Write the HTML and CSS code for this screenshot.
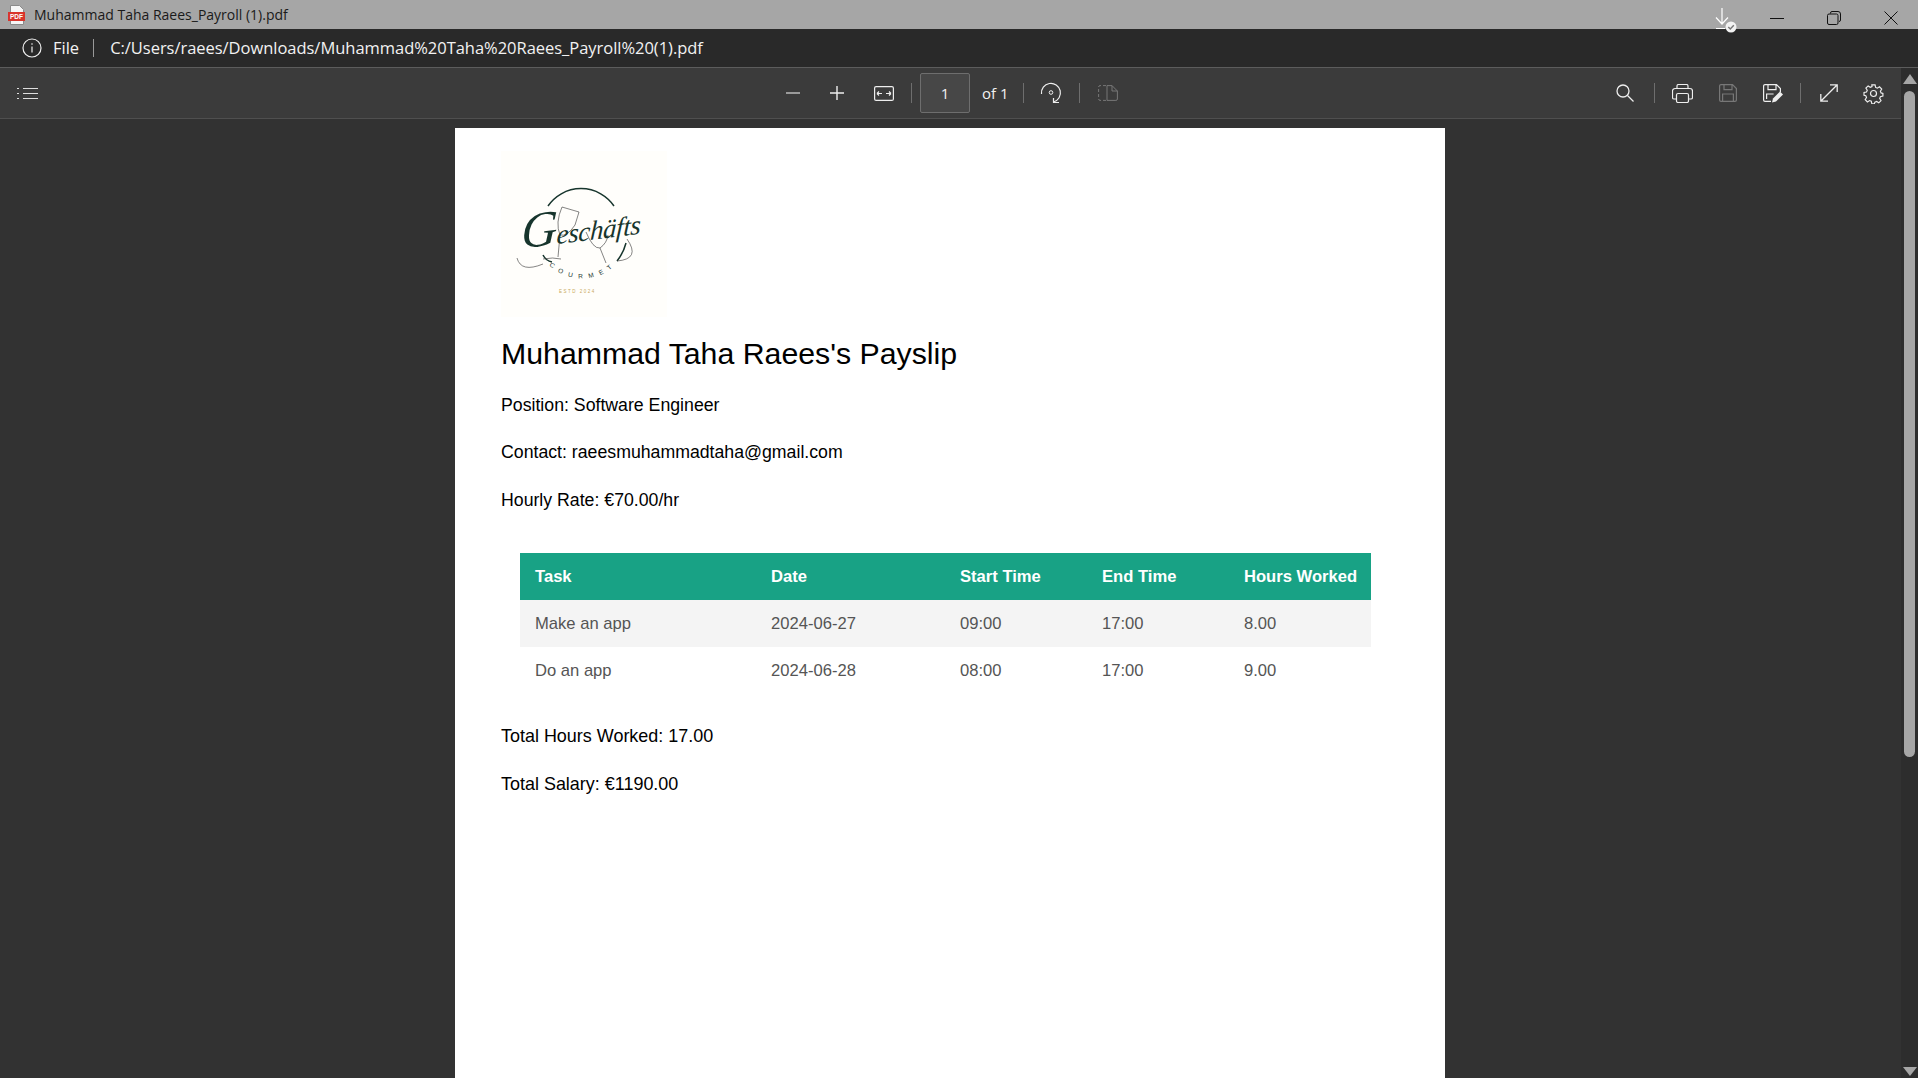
FILE: index.html
```html
<!DOCTYPE html>
<html lang="en-US">
<head>
	<meta charset="utf-8">
	<title>Muhammad Taha Raees_Payroll (1).pdf</title>
	<link rel="stylesheet" href="styles.css">
</head>
<body>
<div class="window">

<!--Title bar-->
<div class="titlebar">
	<svg class="pdf-icon" width="18" height="20" viewBox="0 0 18 20">
		<path d="M2.500.5h9l4 4v15h-13z" fill="#f6f6f6" stroke="#8a8a8a"/>
		<rect x="0" y="7" width="17" height="9" fill="#d9342b"/>
		<text class="pdf-label" x="8.500" y="14">PDF</text>
	</svg>
	<span class="doc-name">Muhammad Taha Raees_Payroll (1).pdf</span>
	<div class="win-buttons">
		<svg class="win-btn" width="14" height="14" viewBox="0 0 14 14"><path d="M0 7.500h14" stroke="#111" fill="none"/></svg>
		<svg class="win-btn" width="14" height="14" viewBox="0 0 14 14"><path d="M3.500 2.500V2a1.500 1.500 0 0 1 1.500-1.500h6A2.500 2.500 0 0 1 13.500 3v6a1.500 1.500 0 0 1-1.500 1.500M2 3h7.500A1.500 1.500 0 0 1 11 4.500V12a1.500 1.500 0 0 1-1.500 1.500H2A1.500 1.500 0 0 1 .5 12V4.500A1.500 1.500 0 0 1 2 3z" stroke="#111" fill="none"/></svg>
		<svg class="win-btn" width="14" height="14" viewBox="0 0 14 14"><path d="M.5.500l13 13M13.500.500l-13 13" stroke="#111" fill="none"/></svg>
	</div>
	<!--finished download badge hangs over the address bar-->
	<svg class="download" width="24" height="34" viewBox="0 0 24 34">
		<path d="M7 8v16M1 17.500L7 24l6-6.500M1 28.500h9" stroke="#fff" stroke-width="1.200" fill="none"/>
		<circle cx="16" cy="27" r="5.500" fill="#f2f2f2"/>
		<path d="M13.300 27l2 2 3.500-3.800" stroke="#777" stroke-width="1.400" fill="none"/>
	</svg>
</div>

<!--Address bar-->
<div class="addressbar">
	<svg class="info" width="20" height="20" viewBox="0 0 20 20">
		<circle cx="10" cy="10" r="9" stroke="#eee" stroke-width="1.200" fill="none"/>
		<path d="M10 8.500v6M10 5.200v1.600" stroke="#eee" stroke-width="1.200" fill="none"/>
	</svg>
	<span class="scheme">File</span>
	<span class="addr-sep"></span>
	<span class="url">C:/Users/raees/Downloads/Muhammad%20Taha%20Raees_Payroll%20(1).pdf</span>
</div>

<div class="viewer">
	<div class="viewer-main">

		<!--PDF toolbar-->
		<div class="toolbar">
			<svg class="list-icon" width="22" height="13" viewBox="0 0 22 13">
				<path d="M0 1.500h2M6 1.500h15M0 6.500h2M6 6.500h15M0 11.500h2M6 11.500h15" stroke="#ddd" stroke-width="1.200" fill="none"/>
			</svg>

			<div class="tool-group center-tools">
				<span class="tool"><svg width="14" height="14" viewBox="0 0 14 14"><path d="M0 7h14" stroke="#bbb" stroke-width="1.500"/></svg></span>
				<span class="tool"><svg width="14" height="14" viewBox="0 0 14 14"><path d="M0 7h14M7 0v14" stroke="#eee" stroke-width="1.400"/></svg></span>
				<span class="tool fit"><svg width="20" height="15" viewBox="0 0 20 15"><rect x=".6" y=".6" width="18.800" height="13.800" rx="1.500" stroke="#eee" stroke-width="1.200" fill="none"/><path d="M3 7.500h5M3 7.500l2-2M3 7.500l2 2M12 7.500h5M17 7.500l-2-2M17 7.500l-2 2" stroke="#eee" stroke-width="1.200" fill="none"/></svg></span>
				<span class="sep sep-fit"></span>
				<span class="page-box">1</span>
				<span class="page-count">of 1</span>
				<span class="sep sep-count"></span>
				<span class="tool rotate"><svg width="22" height="24" viewBox="0 0 22 24"><path d="M1.500 13A9.500 9.500 0 1 1 13.500 21" stroke="#eee" stroke-width="1.200" fill="none"/><path d="M13.500 17v4.500H19" stroke="#eee" stroke-width="1.200" fill="none"/><circle cx="11" cy="11.500" r="1.800" stroke="#eee" fill="none"/></svg></span>
				<span class="sep sep-rotate"></span>
				<span class="tool spread"><svg width="20" height="16" viewBox="0 0 20 16"><path d="M8 .6H2A1.500 1.500 0 0 0 .6 2v12A1.500 1.500 0 0 0 2 15.400h6" stroke="#777" stroke-dasharray="3 2" fill="none"/><path d="M9 .6h5l5.400 5.400v8a1.500 1.500 0 0 1-1.500 1.400H9zM14 .6V6h5.400" stroke="#777" fill="none"/></svg></span>
			</div>

			<div class="tool-group right-tools">
				<span class="tool"><svg width="18" height="18" viewBox="0 0 18 18"><circle cx="7" cy="7" r="6" stroke="#eee" stroke-width="1.300" fill="none"/><path d="M11.500 11.500L17.500 17.500" stroke="#eee" stroke-width="1.300"/></svg></span>
				<span class="sep sep-search"></span>
				<span class="tool"><svg width="21" height="19" viewBox="0 0 21 19"><path d="M5 5V2a1.500 1.500 0 0 1 1.500-1.500h8A1.500 1.500 0 0 1 16 2v3M5 15H2a1.500 1.500 0 0 1-1.500-1.500V7A2.500 2.500 0 0 1 3 4.500h15A2.500 2.500 0 0 1 20.500 7v6.500A1.500 1.500 0 0 1 19 15h-3" stroke="#eee" stroke-width="1.200" fill="none"/><rect x="4.500" y="9.500" width="12" height="9" rx="1.500" stroke="#eee" stroke-width="1.200" fill="none"/></svg></span>
				<span class="tool tool-print"><svg width="18" height="18" viewBox="0 0 18 18"><path d="M2 .6h11.500L17.400 4.500V16a1.400 1.400 0 0 1-1.400 1.400H2A1.400 1.400 0 0 1 .6 16V2A1.400 1.400 0 0 1 2 .6zM5 .6v5h8v-5M3.600 17.400V10h10.800v7.400" stroke="#777" stroke-width="1.200" fill="none"/></svg></span>
				<span class="tool"><svg width="20" height="19" viewBox="0 0 20 19"><path d="M8 17.400H2A1.400 1.400 0 0 1 .6 16V2A1.400 1.400 0 0 1 2 .6h11.500L17.400 4.500V8M5 .6v5h8v-5M3.600 15V10h7" stroke="#eee" stroke-width="1.200" fill="none"/><path d="M9 18.500l1-4 7-7 3 3-7 7z" fill="#eee"/></svg></span>
				<span class="sep sep-save"></span>
				<span class="tool"><svg width="18" height="18" viewBox="0 0 18 18"><path d="M1 17L17 1M10 .8h7.200V8M.8 10v7.200H8" stroke="#eee" stroke-width="1.300" fill="none"/></svg></span>
				<span class="tool"><svg width="21" height="21" viewBox="0 0 21 21"><path d="M8.700 1h3.600l.6 2.800 1.900.8 2.400-1.500 2.500 2.500-1.500 2.400.8 1.900 2 .6v3l-2.800.6-.8 1.900 1.500 2.400-2.500 2.500-2.400-1.500-1.900.8-.6 1.800H8.700l-.6-2.800-1.900-.8-2.400 1.500-2.500-2.500 1.500-2.400-.8-1.900-2-.6v-3l2.800-.6.8-1.900-1.500-2.400 2.500-2.500 2.400 1.500 1.900-.8z" transform="translate(1 1) scale(.9)" stroke="#eee" stroke-width="1.300" fill="none"/><circle cx="10.500" cy="10.500" r="3" stroke="#eee" stroke-width="1.200" fill="none"/></svg></span>
			</div>
		</div>

		<!--The document itself-->
		<div class="pages">
			<div class="page">
				<svg class="logo" width="166" height="166" viewBox="0 0 166 166">
					<rect width="166" height="166" fill="#fffefb"/>
					<path d="M47 55A40 40 0 0 1 113 55" stroke="#17352d" stroke-width="1.500" fill="none"/>
					<path d="M125 92A48 48 0 0 1 116 110M42 104Q45 110 51 111" stroke="#17352d" stroke-width="1.500" fill="none"/>
					<path d="M61 56L78 61L74 74Q66 86 59 84Q54 72 61 56zM59 84L57 106M42 108Q52 106 60 108" stroke="#333" stroke-width=".6" fill="none"/>
					<path d="M85 81Q92 98 99 97Q106 92 107 84M99 97L105 112" stroke="#333" stroke-width=".6" fill="none"/>
					<path d="M16 107Q20 122 42 113M126 88Q140 108 116 110" stroke="#333" stroke-width=".6" fill="none"/>
					<text class="logo-script" x="22" y="90" transform="rotate(-7 80 80) translate(12 0) skewX(-10)"><tspan class="logo-cap">G</tspan>eschäfts</text>
					<defs><path id="logo-curve" d="M44 110A48 48 0 0 0 118 110"/></defs>
					<text class="logo-small"><textPath href="#logo-curve" startOffset="6">COURMET</textPath></text>
					<text class="logo-estd" x="58" y="142">ESTD 2024</text>
				</svg>
				<h1>Muhammad Taha Raees's Payslip</h1>
				<p>Position: Software Engineer</p>
				<p>Contact: raeesmuhammadtaha@gmail.com</p>
				<p>Hourly Rate: €70.00/hr</p>
				<table class="hours">
					<colgroup>
						<col class="col-task"><col class="col-date"><col class="col-start"><col class="col-end"><col class="col-worked">
					</colgroup>
					<tr>
						<th>Task</th><th>Date</th><th>Start Time</th><th>End Time</th><th>Hours Worked</th>
					</tr>
					<tr class="odd">
						<td>Make an app</td><td>2024-06-27</td><td>09:00</td><td>17:00</td><td>8.00</td>
					</tr>
					<tr>
						<td>Do an app</td><td>2024-06-28</td><td>08:00</td><td>17:00</td><td>9.00</td>
					</tr>
				</table>
				<p class="total">Total Hours Worked: 17.00</p>
				<p class="total">Total Salary: €1190.00</p>
			</div>
		</div>
	</div>

	<!--Scrollbar-->
	<div class="scrollbar">
		<span class="arrow arrow-up"></span>
		<span class="thumb"></span>
		<span class="arrow arrow-down"></span>
	</div>
</div>

</div>
</body>
</html>
```

FILE: styles.css
```css
html, body {
	margin: 0;
	height: 100%;
	overflow: hidden;
	background: #323232;
}
.window {
	display: flex;
	flex-direction: column;
	height: 100vh;
	font-family: "Open Sans", "Noto Sans", sans-serif;
}
/* title bar */
.titlebar {
	display: flex;
	align-items: center;
	height: 29px;
	flex: none;
	background: #a6a6a6;
	position: relative;
	z-index: 2;
}
.pdf-icon {
	margin-left: 8px;
}
.pdf-label {
	font-family: "Liberation Sans", sans-serif;
	font-size: 6.500px;
	font-weight: bold;
	text-anchor: middle;
	fill: #fff;
}
.doc-name {
	margin-left: 8px;
	font-size: 14px;
	letter-spacing: 0;
	color: #1a1a1a;
}
.win-buttons {
	display: flex;
	align-items: center;
	margin-left: auto;
	margin-right: 20px;
	margin-top: 7px;
	gap: 43px;
}
.download {
	position: absolute;
	left: 1715px;
	top: 0;
}
/* address bar */
.addressbar {
	display: flex;
	align-items: center;
	height: 38px;
	flex: none;
	background: #292929;
	border-bottom: 1px solid #5c5c5c;
	color: #f2f2f2;
}
.info {
	margin-left: 22px;
}
.scheme {
	margin-left: 11px;
	margin-top: -2px;
	font-size: 16.500px;
}
.addr-sep {
	width: 1px;
	height: 18px;
	background: #999;
	margin-left: 14px;
}
.url {
	margin-left: 16px;
	margin-top: -2px;
	font-size: 16.500px;
	letter-spacing: -0.03px;
}
/* viewer */
.viewer {
	flex: 1;
	display: flex;
	min-height: 0;
}
.viewer-main {
	flex: 1;
	display: flex;
	flex-direction: column;
	min-width: 0;
}
.toolbar {
	display: flex;
	align-items: center;
	position: relative;
	height: 50px;
	flex: none;
	background: #3b3b3b;
	border-bottom: 1px solid #4f4f4f;
	color: #f2f2f2;
}
.list-icon {
	margin-left: 17px;
}
.tool-group {
	display: flex;
	align-items: center;
}
.center-tools {
	margin-left: 732px;
}
.right-tools {
	margin-left: auto;
	margin-right: 6px;
}
.tool {
	display: flex;
	align-items: center;
	justify-content: center;
	width: 44px;
	height: 40px;
}
.tool.fit {
	margin-left: 3px;
}
.tool.rotate {
	margin-left: 5px;
}
.tool.spread {
	margin-left: 6px;
}
.tool-print {
	margin-left: 2px;
	margin-right: 1px;
}
.sep {
	width: 1px;
	height: 20px;
	background: #6e6e6e;
}
.sep-fit {
	margin-left: 5px;
}
.sep-count {
	margin-left: 17px;
}
.sep-rotate {
	margin-left: 6px;
}
.sep-search {
	margin-left: 7px;
	margin-right: 5px;
}
.sep-save {
	margin-left: 5px;
	margin-right: 6px;
}
.page-box {
	display: flex;
	align-items: center;
	justify-content: center;
	box-sizing: border-box;
	width: 50px;
	height: 40px;
	margin-left: 8px;
	background: #474747;
	border: 1px solid #6e6e6e;
	border-radius: 2px;
	font-size: 15px;
}
.page-count {
	margin-left: 12px;
	width: 24px;
	font-size: 15px;
	white-space: nowrap;
}
/* the pdf page */
.pages {
	flex: 1;
	min-height: 0;
	overflow: hidden;
	padding-top: 9px;
	background: #323232;
}
.page {
	box-sizing: border-box;
	width: 990px;
	height: 100%;
	margin-left: 455px;
	padding: 23px 46px 0;
	background: #fff;
	color: #000;
	font-family: "Liberation Sans", Arial, sans-serif;
}
.logo {
	display: block;
}
.logo-script {
	font-family: "Liberation Serif", serif;
	font-style: italic;
	font-size: 27px;
	letter-spacing: -0.3px;
	fill: #17352d;
}
.logo-cap {
	font-size: 50px;
}
.logo-small {
	font-family: "Liberation Sans", sans-serif;
	font-size: 6.500px;
	letter-spacing: 6px;
	fill: #17352d;
}
.logo-estd {
	font-family: "Liberation Sans", sans-serif;
	font-size: 4.500px;
	letter-spacing: 1.500px;
	fill: #c9a95c;
}
h1 {
	font-size: 30.270px;
	font-weight: normal;
	line-height: 36px;
	margin: 19px 0 22.800px;
}
p {
	font-size: 17.720px;
	line-height: 21px;
	margin: 0 0 26.500px;
}
p.total {
	font-size: 17.970px;
	margin-bottom: 27.500px;
}
.hours {
	table-layout: fixed;
	border-collapse: collapse;
	width: 851px;
	margin: 42.200px 0 32px 19px;
	font-size: 16.600px;
}
.col-task { width: 236px; }
.col-date { width: 189px; }
.col-start { width: 142px; }
.col-end { width: 142px; }
.col-worked { width: 142px; }
.hours th, .hours td {
	height: 45px;
	padding: 2px 0 0 15px;
	text-align: left;
	white-space: nowrap;
}
.hours th {
	background: #18a285;
	color: #fff;
}
.hours td {
	color: #555;
}
.odd td {
	background: #f4f4f4;
}
/* scrollbar */
.scrollbar {
	display: flex;
	flex-direction: column;
	align-items: center;
	width: 17px;
	flex: none;
	background: #2d2d2d;
}
.arrow {
	width: 0;
	height: 0;
	border-left: 7px solid transparent;
	border-right: 7px solid transparent;
}
.arrow-up {
	margin-top: 6px;
	border-bottom: 10px solid #a6a6a6;
}
.arrow-down {
	margin-top: auto;
	margin-bottom: 2px;
	border-top: 9px solid #a6a6a6;
}
.thumb {
	width: 11px;
	height: 666px;
	margin-top: 7px;
	background: #a6a6a6;
	border-radius: 6px;
}
```
